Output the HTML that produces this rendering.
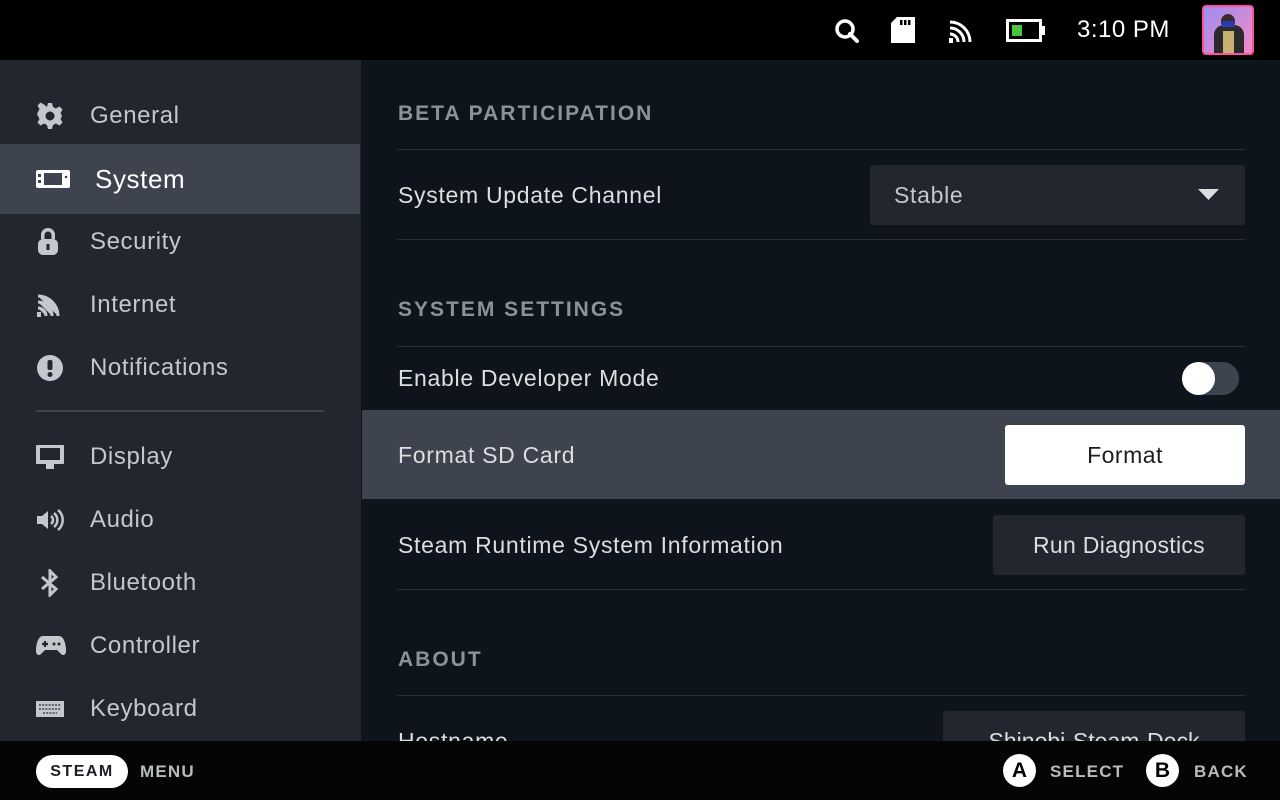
<!DOCTYPE html>
<html><head><meta charset="utf-8"><style>
*{margin:0;padding:0;box-sizing:border-box}
body{width:1280px;height:800px;overflow:hidden;background:#0e141b;font-family:"Liberation Sans",sans-serif;position:relative;color:#dcdedf}
.abs{position:absolute}
#top{left:0;top:0;width:1280px;height:60px;background:#000}
#side{left:0;top:60px;width:361px;height:681px;background:#23262e}
.item{position:absolute;left:0;width:360px;height:63px;display:flex;align-items:center;font-size:24px;letter-spacing:0.6px;color:#c4c8cd}
.item svg{position:absolute;left:36px;fill:#c4c8cd}
.item span{position:absolute;left:90px}
.sel{background:#3d4450;color:#fff;height:70px}
.sel span{left:95px;font-size:26px}
.hdr{position:absolute;left:398px;font-size:21px;font-weight:bold;color:#8b929a;letter-spacing:2px}
.line{position:absolute;left:397px;width:848px;height:1px;background:#2a3039}
.lbl{position:absolute;left:398px;font-size:23px;letter-spacing:0.7px;color:#dcdedf}
#bot{left:0;top:741px;width:1280px;height:59px;background:#050505}
.bt{position:absolute;font-size:17px;font-weight:bold;color:#b8bcbf;letter-spacing:1.2px}
</style></head><body>
<div id="top" class="abs">
<svg class="abs" style="left:834px;top:18px" width="26" height="26" viewBox="0 0 26 26"><circle cx="11" cy="11" r="8" fill="none" stroke="#fff" stroke-width="3.5"/><path d="M16 16l7 7" stroke="#fff" stroke-width="4" stroke-linecap="round"/></svg>
<svg class="abs" style="left:891px;top:17px" width="24" height="26" viewBox="0 0 24 26"><path d="M6 0h18v26H0V6z" fill="#fff"/><rect x="9" y="3" width="2.5" height="5" fill="#000"/><rect x="13" y="3" width="2.5" height="5" fill="#000"/><rect x="17" y="3" width="2.5" height="5" fill="#000"/></svg>
<svg class="abs" style="left:948px;top:18px" width="26" height="26" viewBox="0 0 26 26" fill="none" stroke="#fff" stroke-width="3"><path d="M2 4a20 20 0 0 1 20 20M2 10a14 14 0 0 1 14 14M2 16a8 8 0 0 1 8 8"/><rect x="1" y="20" width="4" height="5" fill="#fff" stroke="none"/></svg>
<svg class="abs" style="left:1006px;top:19px" width="40" height="24" viewBox="0 0 40 24"><rect x="1.5" y="1.5" width="33" height="20" fill="none" stroke="#fff" stroke-width="3"/><rect x="35" y="7" width="4" height="9" fill="#fff"/><rect x="6" y="6" width="10" height="11" fill="#4ac43a"/></svg>
<div class="abs" style="left:1077px;top:16px;font-size:24px;letter-spacing:0.5px;color:#fff">3:10 PM</div>
<div class="abs" style="left:1202px;top:5px;width:52px;height:50px;border-radius:4px;background:linear-gradient(135deg,#9d8ef0,#f48ac4);border:2px solid #ff4fa0;overflow:hidden">
<div class="abs" style="left:10px;top:18px;width:30px;height:32px;background:#2a2a2a;border-radius:10px 10px 0 0"></div>
<div class="abs" style="left:17px;top:7px;width:14px;height:15px;background:#3a2a2a;border-radius:50%"></div>
<div class="abs" style="left:18px;top:14px;width:12px;height:6px;background:#2a3ab0"></div>
<div class="abs" style="left:19px;top:24px;width:11px;height:24px;background:#c8b070"></div>
</div>
</div>
<div id="side" class="abs">
<div class="item" style="top:24px"><svg width="28" height="28" viewBox="0 0 28 28"><path d="M12 1h4l1 4 3 1.5 3.5-2 3 3-2 3.5L26 14l-.5 0 .5 0-1.5 3 2 3.5-3 3-3.5-2L17 23l-1 4h-4l-1-4-3-1.5-3.5 2-3-3 2-3.5L2 14l-1-2 1-2 1.5-3-2-3.5 3-3 3.5 2L11 5z"/><circle cx="14" cy="14" r="4.5" fill="#23262e"/></svg><span>General</span></div>
<div class="item sel" style="top:84px"><svg width="34" height="20" viewBox="0 0 34 20"><rect x="0" y="1" width="34" height="18" rx="2" fill="#fff"/><rect x="8" y="4" width="18" height="12" fill="#3d4450"/><rect x="2" y="5" width="3" height="3" fill="#3d4450"/><rect x="2" y="11" width="3" height="3" fill="#3d4450"/><circle cx="30" cy="8" r="1.3" fill="#3d4450"/></svg><span>System</span></div>
<div class="item" style="top:150px"><svg width="24" height="30" viewBox="0 0 24 30"><path d="M5 12V8a7 7 0 0 1 14 0v4h-3.5V8a3.5 3.5 0 0 0-7 0v4z"/><rect x="2" y="12" width="20" height="16" rx="5"/><rect x="10.5" y="17" width="3" height="6" fill="#23262e"/></svg><span>Security</span></div>
<div class="item" style="top:213px"><svg width="26" height="26" viewBox="0 0 26 26" fill="none" stroke="#c4c8cd" stroke-width="3"><path d="M2 4a20 20 0 0 1 20 20M2 10a14 14 0 0 1 14 14M2 16a8 8 0 0 1 8 8"/><rect x="1" y="20" width="4" height="5" fill="#c4c8cd" stroke="none"/></svg><span>Internet</span></div>
<div class="item" style="top:276px"><svg width="28" height="28" viewBox="0 0 28 28"><circle cx="14" cy="14" r="13"/><rect x="11.5" y="6" width="5" height="10" rx="2" fill="#23262e"/><circle cx="14" cy="20.5" r="2.5" fill="#23262e"/></svg><span>Notifications</span></div>
<div class="abs" style="left:36px;top:350px;width:288px;height:2px;background:#3d4450"></div>
<div class="item" style="top:365px"><svg width="28" height="26" viewBox="0 0 28 26"><rect x="0" y="1" width="28" height="19" rx="1"/><rect x="4" y="4" width="20" height="12" fill="#23262e"/><rect x="10" y="20" width="8" height="5"/></svg><span>Display</span></div>
<div class="item" style="top:428px"><svg width="28" height="26" viewBox="0 0 28 26"><path d="M1 9h5l6-5v18l-6-5H1z"/><path d="M15 9a5 5 0 0 1 0 8M18 6a9 9 0 0 1 0 14M22 3a13 13 0 0 1 0 20" stroke="#c4c8cd" stroke-width="2.5" fill="none"/></svg><span>Audio</span></div>
<div class="item" style="top:491px"><svg width="28" height="28" viewBox="0 0 28 28"><path d="M6 8l14 12-6 6V2l6 6L6 20" stroke="#c4c8cd" stroke-width="3" fill="none"/></svg><span>Bluetooth</span></div>
<div class="item" style="top:554px"><svg width="30" height="24" viewBox="0 0 30 24"><path d="M7 2h16c4 0 6 5 7 12s-3 9-6 5l-3-3H9l-3 3c-3 4-7 2-6-5S3 2 7 2z"/><path d="M6 10h6M9 7v6" stroke="#23262e" stroke-width="2.2"/><circle cx="18" cy="10" r="1.5" fill="#23262e"/><circle cx="23" cy="10" r="1.5" fill="#23262e"/></svg><span>Controller</span></div>
<div class="item" style="top:617px"><svg width="28" height="20" viewBox="0 0 28 20"><rect x="0" y="2" width="28" height="16"/><path d="M3 6h22M3 10h22M7 14h14" stroke="#23262e" stroke-width="1.3" stroke-dasharray="2 1.2"/></svg><span>Keyboard</span></div>
</div>
<div class="hdr" style="top:102px">BETA PARTICIPATION</div>
<div class="line" style="top:149px"></div>
<div class="lbl" style="top:182px">System Update Channel</div>
<div class="abs" style="left:870px;top:165px;width:375px;height:60px;background:#23262e;border-radius:3px"></div>
<div class="abs" style="left:894px;top:182px;font-size:23px;letter-spacing:0.7px;color:#c4c8cd">Stable</div>
<svg class="abs" style="left:1198px;top:189px" width="22" height="12" viewBox="0 0 22 12"><path d="M0 0h21L10.5 11z" fill="#dcdedf"/></svg>
<div class="line" style="top:239px"></div>
<div class="hdr" style="top:298px">SYSTEM SETTINGS</div>
<div class="line" style="top:346px"></div>
<div class="lbl" style="top:365px">Enable Developer Mode</div>
<div class="abs" style="left:1182px;top:362px;width:57px;height:33px;border-radius:17px;background:#3d4450"></div>
<div class="abs" style="left:1182px;top:362px;width:33px;height:33px;border-radius:50%;background:#fff"></div>
<div class="abs" style="left:362px;top:410px;width:918px;height:89px;background:#3d4450"></div>
<div class="lbl" style="top:442px">Format SD Card</div>
<div class="abs" style="left:1005px;top:425px;width:240px;height:60px;background:#fff;border-radius:3px;color:#1a1d22;font-size:23px;letter-spacing:0.5px;text-align:center;line-height:60px">Format</div>
<div class="lbl" style="top:532px">Steam Runtime System Information</div>
<div class="abs" style="left:993px;top:515px;width:252px;height:60px;background:#23262e;border-radius:3px;font-size:23px;letter-spacing:0.3px;text-align:center;line-height:60px">Run Diagnostics</div>
<div class="line" style="top:589px"></div>
<div class="hdr" style="top:648px">ABOUT</div>
<div class="line" style="top:695px"></div>
<div class="lbl" style="top:728px">Hostname</div>
<div class="abs" style="left:943px;top:711px;width:302px;height:60px;background:#23262e;border-radius:3px;font-size:23px;text-align:center;line-height:60px">Shinobi-Steam-Deck</div>
<div id="bot" class="abs">
<div class="abs" style="left:36px;top:14px;width:92px;height:33px;border-radius:17px;background:#fff;color:#1a1d22;font-size:16px;font-weight:bold;letter-spacing:1.5px;text-align:center;line-height:33px">STEAM</div>
<div class="bt" style="left:140px;top:21px">MENU</div>
<div class="abs" style="left:1003px;top:13px;width:33px;height:33px;border-radius:50%;background:#fff;color:#000;font-weight:bold;font-size:21px;text-align:center;line-height:33px">A</div>
<div class="bt" style="left:1050px;top:21px">SELECT</div>
<div class="abs" style="left:1146px;top:13px;width:33px;height:33px;border-radius:50%;background:#fff;color:#000;font-weight:bold;font-size:21px;text-align:center;line-height:33px">B</div>
<div class="bt" style="left:1194px;top:21px">BACK</div>
</div>
</body></html>
